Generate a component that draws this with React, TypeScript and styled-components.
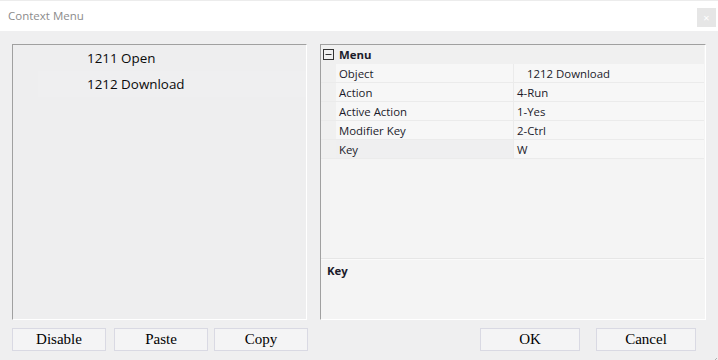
import React from 'react';
import styled, { createGlobalStyle } from 'styled-components';

const Global = createGlobalStyle`
  html, body { margin: 0; padding: 0; background: #efeff0; }
  body { font-family: "Open Sans", "Noto Sans", sans-serif; }
`

const Window = styled.div`
  width: 718px;
  height: 360px;
  display: flex;
  flex-direction: column;
  background: #efeff0;
  overflow: hidden;
  position: relative;
`

const TitleBar = styled.div`
  height: 31px;
  flex: none;
  background: #fff;
  border-top: 1px solid #ececec;
  box-sizing: border-box;
  display: flex;
  align-items: center;
  justify-content: space-between;
  padding-left: 8px;
`

const Title = styled.span`
  font-size: 11.5px;
  color: #8c8c8c;
  margin-top: -2px;
`

const CloseBox = styled.div`
  width: 19px;
  height: 19px;
  margin-right: 2px;
  background: #e6e6e6;
  color: #fff;
  font-size: 11px;
  display: flex;
  align-items: center;
  justify-content: center;
  align-self: flex-end;
  margin-bottom: 4px;
`

const Body = styled.div`
  flex: 1;
  display: flex;
  flex-direction: column;
  padding: 13px 12px 0 12px;
`

const Panels = styled.div`
  display: flex;
  gap: 13px;
  height: 276px;
`

const Sunken = styled.div<{ $w: number; $bg: string }>`
  width: ${p => p.$w}px;
  box-sizing: border-box;
  border-top: 1px solid #a0a0a0;
  border-left: 1px solid #a0a0a0;
  border-right: 1px solid #fff;
  border-bottom: 1px solid #fff;
  background: ${p => p.$bg};
  display: flex;
  flex-direction: column;
`

const ListRow = styled.div<{ $alt?: boolean }>`
  height: 26px;
  display: flex;
  align-items: center;
  margin-left: ${p => (p.$alt ? '25px' : '0')};
  padding-left: ${p => (p.$alt ? '49px' : '74px')};
  background: ${p => (p.$alt ? '#efeff0' : 'transparent')};
  font-family: "Open Sans", "Noto Sans", sans-serif;
  font-size: 13.4px;
  color: #0a0a0a;
`

const Grid = styled.div`
  flex: 1;
  display: flex;
  flex-direction: column;
  background: #f4f4f4;
  margin-right: 1px;
`

const Row = styled.div<{ $head?: boolean }>`
  height: 19px;
  display: flex;
  box-sizing: border-box;
  border-bottom: 1px solid ${p => (p.$head ? '#f0f0f0' : '#ebebeb')};
  font-size: 11.4px;
  color: #1b1b2b;
`

const Gutter = styled.div`
  width: 15px;
  flex: none;
  background: #f0f0f0;
  display: flex;
  align-items: center;
  justify-content: center;
`

const HeadCell = styled.div`
  flex: 1;
  background: #f0f0f0;
  display: flex;
  align-items: center;
  padding-left: 3px;
  font-weight: 700;
`

const Label = styled.div<{ $sel?: boolean }>`
  width: 178px;
  flex: none;
  box-sizing: border-box;
  padding-left: 3px;
  display: flex;
  align-items: center;
  background: ${p => (p.$sel ? '#efeff0' : '#f7f7f7')};
  border-right: 1px solid #ebebeb;
`

const Value = styled.div<{ $indent?: number }>`
  flex: 1;
  display: flex;
  align-items: center;
  padding-left: ${p => p.$indent ?? 3}px;
  background: #f7f7f7;
`

const Spacer = styled.div`
  flex: 1;
`

const Desc = styled.div`
  height: 61px;
  flex: none;
  border-top: 1px solid #e6e6e6;
  box-shadow: inset 0 1px 0 #fafafa;
  padding: 4px 0 0 6px;
  box-sizing: border-box;
  font-size: 11.4px;
  font-weight: 700;
  color: #1b1b2b;
`

const ButtonBar = styled.div`
  display: flex;
  align-items: center;
  margin-top: 8px;
  height: 23px;
`

const Btn = styled.button<{ $w: number; $gap?: number }>`
  width: ${p => p.$w}px;
  height: 23px;
  margin-left: ${p => p.$gap ?? 0}px;
  box-sizing: border-box;
  border: 1px solid #d9d9e3;
  background: #f4f4f5;
  font-family: "Liberation Serif", "Times New Roman", serif;
  font-size: 15px;
  color: #000;
  padding: 0;
`

const Grip = styled.div`
  position: absolute;
  right: 1px;
  bottom: 1px;
  width: 10px;
  height: 10px;
`

const props = [
  { k: 'Object', v: '1212 Download', indent: 13 },
  { k: 'Action', v: '4-Run' },
  { k: 'Active Action', v: '1-Yes' },
  { k: 'Modifier Key', v: '2-Ctrl' },
  { k: 'Key', v: 'W', sel: true },
]

export default function App() {
  return (
    <Window>
      <Global />
      <TitleBar>
        <Title>Context Menu</Title>
        <CloseBox>×</CloseBox>
      </TitleBar>
      <Body>
        <Panels>
          <Sunken $w={295} $bg="#eeeeef">
            <ListRow>1211 Open</ListRow>
            <ListRow $alt>1212 Download</ListRow>
          </Sunken>
          <Sunken $w={386} $bg="#f4f4f4">
            <Grid>
              <Row $head>
                <Gutter>
                  <svg width="11" height="11" viewBox="0 0 11 11">
                    <rect x="0.5" y="0.5" width="10" height="10" fill="none" stroke="#333" />
                    <line x1="2.5" y1="5.5" x2="8.5" y2="5.5" stroke="#333" />
                  </svg>
                </Gutter>
                <HeadCell>Menu</HeadCell>
              </Row>
              {props.map(p => (
                <Row key={p.k}>
                  <Gutter />
                  <Label $sel={p.sel}>{p.k}</Label>
                  <Value $indent={p.indent}>{p.v}</Value>
                </Row>
              ))}
              <Spacer />
              <Desc>Key</Desc>
            </Grid>
          </Sunken>
        </Panels>
        <ButtonBar>
          <Btn $w={94}>Disable</Btn>
          <Btn $w={94} $gap={8}>Paste</Btn>
          <Btn $w={94} $gap={6}>Copy</Btn>
          <Btn $w={100} $gap={172}>OK</Btn>
          <Btn $w={100} $gap={16}>Cancel</Btn>
        </ButtonBar>
      </Body>
      <Grip>
        <svg width="10" height="10" viewBox="0 0 10 10">
          <line x1="2" y1="10" x2="10" y2="2" stroke="#b0b0b0" />
          <line x1="5" y1="10" x2="10" y2="5" stroke="#b0b0b0" />
          <line x1="8" y1="10" x2="10" y2="8" stroke="#b0b0b0" />
        </svg>
      </Grip>
    </Window>
  );
}
